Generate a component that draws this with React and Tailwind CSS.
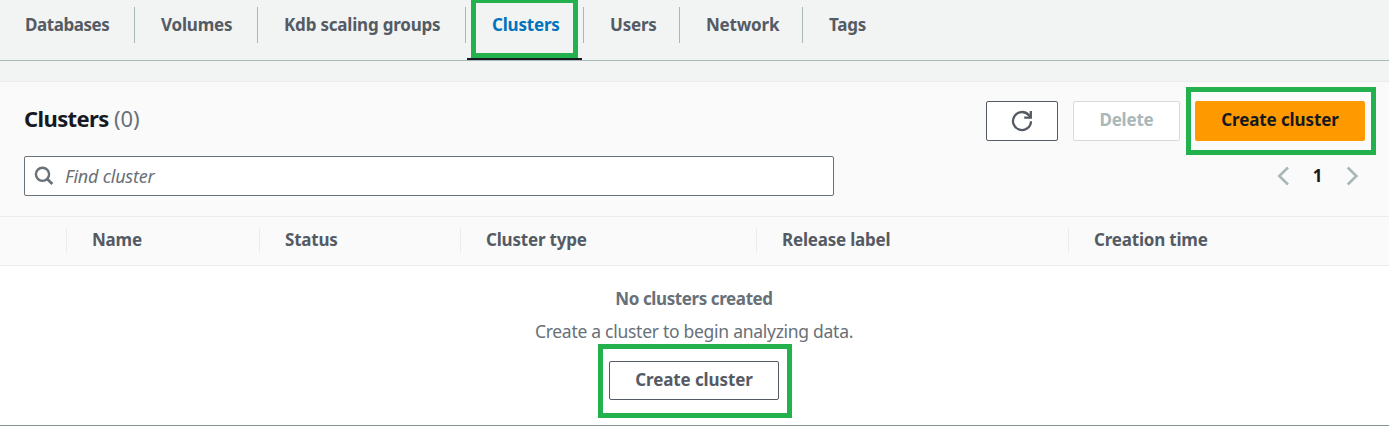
import React from "react";

const tabs = [
  { label: "Databases", cell: "w-[135px] pl-[25px] tracking-[-0.45px]" },
  { label: "Volumes", cell: "w-[123px] pl-[26px]" },
  { label: "Kdb scaling groups", cell: "w-[208px] pl-[26px]" },
  { label: "Clusters", cell: "w-[118px] pl-[26px]", active: true },
  { label: "Users", cell: "w-[96px] pl-[26px]" },
  { label: "Network", cell: "w-[123px] pl-[26px]" },
  { label: "Tags", cell: "w-[90px] pl-[26px]", last: true },
];

const columns = [
  { label: "", cell: "w-[67px]" },
  { label: "Name", cell: "w-[193px]" },
  { label: "Status", cell: "w-[201px]" },
  { label: "Cluster type", cell: "w-[296px]" },
  { label: "Release label", cell: "w-[312px]" },
  { label: "Creation time", cell: "w-[320px]", last: true },
];

function Tab({ label, cell, active, last }) {
  return (
    <div className={`relative h-[60px] shrink-0 pt-[7px] ${active ? "text-[#0073bb]" : ""}`}>
      <div className={`h-[36px] whitespace-nowrap leading-[35px] ${cell} ${last ? "" : "border-r border-[#aab7b8]"}`}>
        {label}
      </div>
      {active && (
        <>
          <div className="absolute left-px top-[58px] h-[2px] w-[115px] bg-[#16191f]" />
          <div className="absolute left-[5px] top-[-2px] h-[60px] w-[107px] border-[5px] border-[#22b14c]" />
        </>
      )}
    </div>
  );
}

function Chevron({ right }) {
  return (
    <svg width="14" height="22" viewBox="0 0 14 22" fill="none" stroke="#aab7b8" strokeWidth="2.6">
      <path d={right ? "M2.7 2.5 11.4 11 2.7 19.5" : "M12 2.5 3.3 11 12 19.5"} />
    </svg>
  );
}

export default function App() {
  return (
    <div className="h-[426px] w-[1389px] overflow-hidden bg-[#f2f3f3] font-['Noto_Sans',sans-serif] text-[17px] font-bold tracking-[-0.2px] text-[#545b64]">
      <nav className="flex h-[61px] border-b border-[#aab7b8]">
        {tabs.map((t) => (
          <Tab key={t.label} {...t} />
        ))}
      </nav>

      <section className="mt-5 flex h-[345px] flex-col border-b border-t border-b-[#879596] border-t-[#eaeded] bg-white">
        <header className="h-[135px] shrink-0 border-b border-[#eaeded] bg-[#fafafa] pl-6 pr-6 pt-[19px]">
          <div className="flex h-10 justify-between">
            <h1 className="whitespace-nowrap text-[22px] font-bold leading-[34px] tracking-[-0.6px] text-[#16191f]">
              Clusters <span className="font-normal tracking-[0px] text-[#687078]">(0)</span>
            </h1>
            <div className="flex gap-[15px] leading-[36px]">
              <button className="flex h-10 w-[72px] items-center justify-center rounded-[2px] border border-[#545b64] bg-white">
                <svg width="24" height="24" viewBox="0 0 24 24" fill="none" stroke="#545b64" strokeWidth="2.3">
                  <path d="M21 12.2a9 9 0 1 1-2.4-6.3l2 2.2" />
                  <path d="M20.8 2v6.6h-6.6" />
                </svg>
              </button>
              <button className="h-10 w-[107px] rounded-[2px] border border-[#d5dbdb] bg-white pb-[3px] leading-[35px] text-[#aab7b8]">
                Delete
              </button>
              <div className="relative">
                <button className="h-10 w-[170px] rounded-[2px] border border-[#ff9900] bg-[#ff9900] pb-[3px] leading-[35px] tracking-[-0.1px] text-[#16191f]">
                  Create cluster
                </button>
                <div className="absolute left-[-9px] top-[-14px] h-[68px] w-[190px] border-[5px] border-[#22b14c]" />
              </div>
            </div>
          </div>
          <div className="mt-[15px] flex h-10 items-center justify-between">
            <div className="flex h-10 w-[810px] items-center rounded-[2px] border border-[#687078] bg-white pl-[9px]">
              <svg width="22" height="22" viewBox="0 0 22 22" fill="none" stroke="#687078" strokeWidth="2.4">
                <circle cx="8.5" cy="9.3" r="6.6" />
                <path d="m13.2 14 5.2 5" strokeWidth="2.8" />
              </svg>
              <span className="ml-[9px] text-[18px] font-normal italic tracking-[-0.2px] text-[#687078]">Find cluster</span>
            </div>
            <div className="mr-[6px] flex items-center text-[#16191f]">
              <Chevron />
              <span className="w-[55px] text-center">1</span>
              <Chevron right />
            </div>
          </div>
        </header>

        <div className="flex h-[49px] shrink-0 border-b border-[#eaeded] bg-[#fafafa] pt-[11px]">
          {columns.map((c) => (
            <div
              key={c.label}
              className={`h-[25px] whitespace-nowrap leading-[23px] ${c.label ? "pl-[25px]" : ""} ${c.cell} ${c.last ? "" : "border-r border-[#eaeded]"}`}
            >
              {c.label}
            </div>
          ))}
        </div>

        <div className="flex flex-col items-center pr-px text-[#687078]">
          <p className="mt-[21px] h-6 leading-6 tracking-[-0.4px]">No clusters created</p>
          <p className="mt-2 h-6 text-[17.5px] font-normal leading-6 tracking-[-0.28px]">
            Create a cluster to begin analyzing data.
          </p>
          <div className="relative mt-[18px]">
            <button className="h-[39px] w-[170px] rounded-[2px] border border-[#545b64] bg-white pb-[2px] leading-[35px] tracking-[-0.1px] text-[#545b64]">
              Create cluster
            </button>
            <div className="absolute left-[-11px] top-[-17px] h-[74px] w-[194px] border-[5px] border-[#22b14c]" />
          </div>
        </div>
      </section>
    </div>
  );
}
